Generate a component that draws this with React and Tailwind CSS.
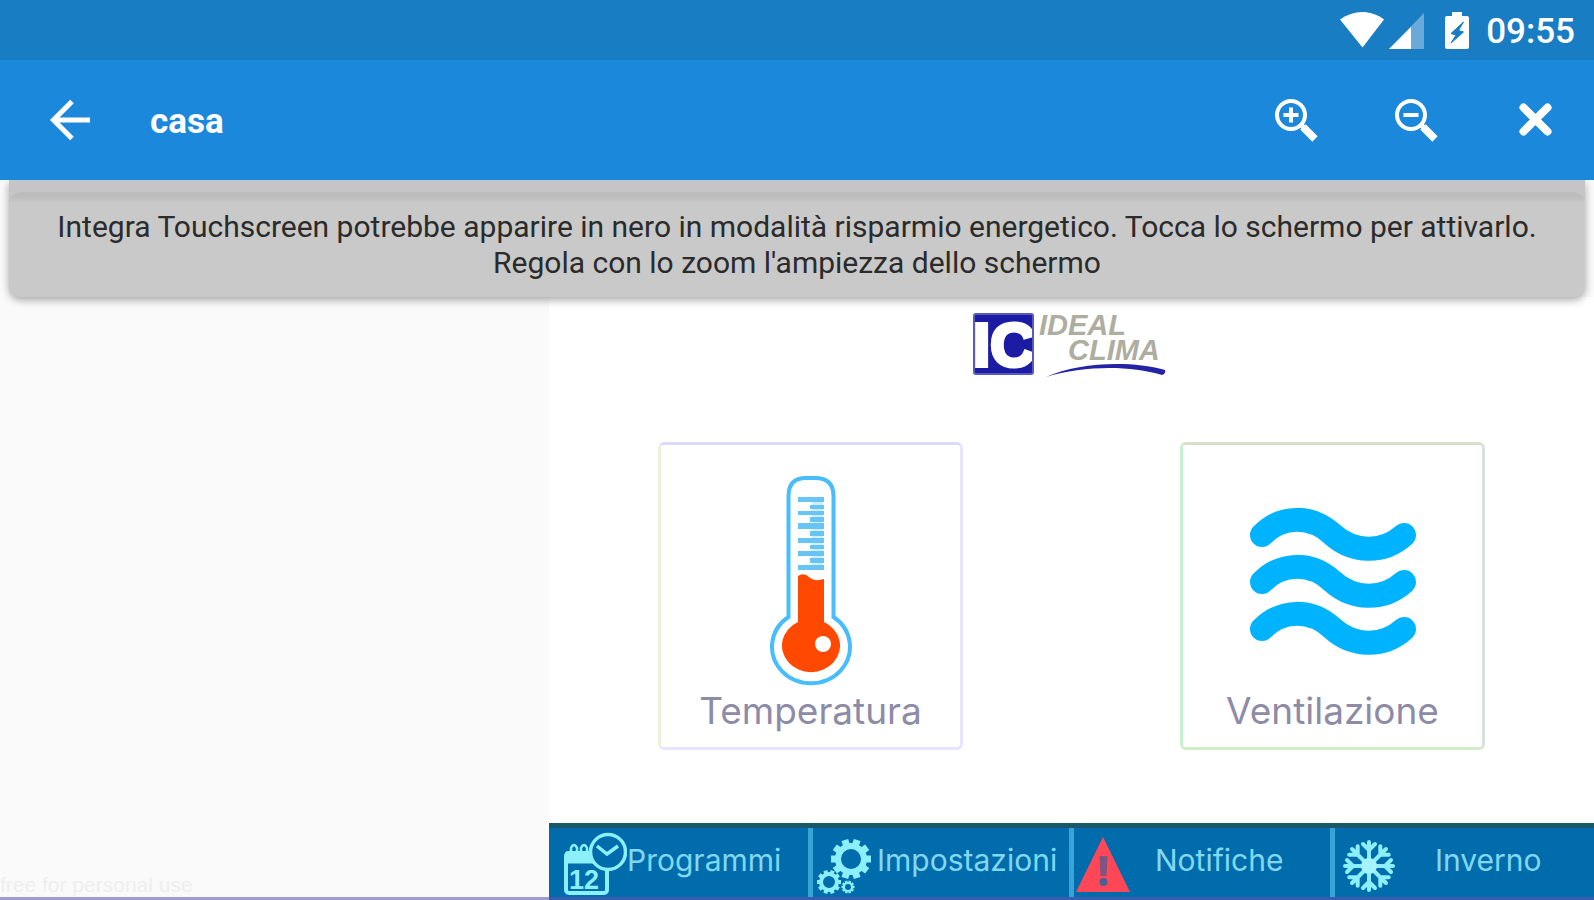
import React from "react";

function StatusBar() {
  return (
    <div className="flex h-15 items-center justify-end bg-[#197dc3] pr-[19px] text-white">
      <svg className="h-10 w-[46px]" viewBox="0 0 46 40" fill="currentColor" aria-hidden="true">
        <path d="M0 9.500C7 4.500 14.500 2 22 2s16 2.500 22 7.500L22.500 37.500z" />
      </svg>
      <svg className="ml-[3px] h-10 w-9" viewBox="0 0 36 40" aria-hidden="true">
        <path d="M0 39L35 3V39z" fill="#fff" fillOpacity=".35" />
        <path d="M0 39L22 17V39z" fill="#fff" />
      </svg>
      <svg className="ml-5 h-10 w-6" viewBox="0 0 24 40" aria-hidden="true">
        <path d="M7 2h10v4h5q2 0 2 2v29q0 2-2 2H2q-2 0-2-2V8q0-2 2-2h5z" fill="#fff" />
        <path d="M18.500 12L6 23.500l5 1.500-5 8L18.500 22l-5-1.500z" fill="#197dc3" stroke="#197dc3" />
      </svg>
      <time className="ml-[17px] pt-1 font-['Roboto'] text-[35px] leading-10 font-medium">09:55</time>
    </div>
  );
}

function Magnifier({ plus }) {
  return (
    <svg className="h-11 w-11" viewBox="0 0 44 44" fill="none" stroke="#fff" aria-hidden="true">
      <circle cx="17" cy="17" r="14" strokeWidth="4" />
      <path d="M26 26l4 4" strokeWidth="5" />
      <path d="M29 29l12 12" strokeWidth="7.500" />
      <path d={plus ? "M9.500 17h15M17 9.500v15" : "M9.500 17h15"} strokeWidth="4" />
    </svg>
  );
}

function AppBar() {
  return (
    <header className="relative z-20 flex h-30 items-center bg-[#1c88db] pr-9 pl-12 text-white">
      <button type="button" aria-label="Indietro" className="flex h-12 w-12 items-center">
        <svg className="h-11 w-11" viewBox="0 0 44 44" fill="none" stroke="#fff" strokeWidth="5" aria-hidden="true">
          <path d="M42 22H6M24 3.500L5.500 22 24 40.500" />
        </svg>
      </button>
      <h1 className="ml-[54px] pt-1 font-['Roboto'] text-[35px] leading-10 font-bold">casa</h1>
      <div className="ml-auto flex items-center gap-19">
        <button type="button" aria-label="Ingrandisci">
          <Magnifier plus />
        </button>
        <button type="button" aria-label="Riduci">
          <Magnifier />
        </button>
        <button type="button" aria-label="Chiudi">
          <svg className="h-11 w-11" viewBox="0 0 44 44" fill="none" stroke="#fff" strokeWidth="8" strokeLinecap="round" aria-hidden="true">
            <path d="M9.500 9.500l24 24M33.500 9.500l-24 24" />
          </svg>
        </button>
      </div>
    </header>
  );
}

function Notice() {
  return (
    <div className="relative z-10 px-[9px]">
      <div className="rounded-b-xl bg-[#c5c5c7] pt-3 shadow-[0_3px_9px_rgba(0,0,0,0.35)]">
        <p
          role="status"
          className="rounded-xl bg-linear-to-b from-[#bdbdbd] from-5% to-[#c9c9c9] to-10% px-12 pt-[17px] pb-4 text-center font-['Roboto'] text-[30px] leading-9 text-[#2b2b2b]"
        >
          Integra Touchscreen potrebbe apparire in nero in modalità risparmio energetico. Tocca lo schermo per attivarlo.
          Regola con lo zoom l'ampiezza dello schermo
        </p>
      </div>
    </div>
  );
}

function Logo() {
  return (
    <svg className="mx-auto h-16 w-[198px]" viewBox="0 0 198 64" role="img" aria-label="Ideal Clima">
      <rect x="1" y="1" width="59" height="60" rx="2" fill="#1b1ba4" />
      <text x="0" y="53" fill="#fff" stroke="#fff" strokeWidth="4" fontFamily="Liberation Sans, sans-serif" fontWeight="700" fontSize="62">
        IC
      </text>
      <rect x="1" y="1" width="59" height="60" rx="2" fill="none" stroke="#5a5abd" strokeWidth="2" />
      <g fill="#adada0" fontFamily="Liberation Sans, sans-serif" fontStyle="italic" fontWeight="700" fontSize="29">
        <text x="66" y="22">IDEAL</text>
        <text x="95" y="47">CLIMA</text>
      </g>
      <path d="M73 64C105 50 155 47 192 57q1 4-3 5C155 52 110 53 73 64z" fill="#2323a6" />
    </svg>
  );
}

const ticks = [
  [22, 5, 1], [30, 4, 0], [36, 4, 1], [42, 5, 0], [48, 6, 1], [56, 5, 0],
  [63, 5, 1], [70, 4, 0], [76, 5, 1], [83, 5, 0], [90, 5, 1],
];

function Thermometer() {
  return (
    <svg className="h-[212px] w-[84px]" viewBox="0 0 84 212" aria-hidden="true">
      <path
        d="M19.500 142V21Q19.500 3 37 3h9Q64.500 3 64.500 21V142A39 36.500 0 1 1 19.500 142z"
        fill="#fff"
        stroke="#47bdfb"
        strokeWidth="4"
      />
      {ticks.map(([y, h, long]) => (
        <rect key={y} x={long ? 29 : 41} y={y} width={long ? 26 : 14} height={h} fill="#69c4f6" />
      ))}
      <path d="M43 22h11v70H43z" fill="#69c4f6" fillOpacity=".3" />
      <path d="M29 101q6-4 11 1t15 2v43A29 26.500 0 1 1 29 147z" fill="#ff4800" />
      <circle cx="54" cy="169" r="8" fill="#fff" />
    </svg>
  );
}

function Waves() {
  return (
    <svg className="h-[150px] w-[168px]" viewBox="0 0 168 150" fill="none" stroke="#00b3ff" strokeWidth="24" strokeLinecap="round" aria-hidden="true">
      {[0, 47, 94].map((y) => (
        <path key={y} transform={`translate(0 ${y})`} d="M13 28C33 8 62 8 83 27S134 47 155 28" />
      ))}
    </svg>
  );
}

function Tile({ label, className, children }) {
  return (
    <button type="button" className={`flex h-[308px] w-[305px] flex-col items-center justify-end rounded-md border-3 bg-white pb-4 ${className}`}>
      {children}
      <span className="mt-1 font-['Inter'] text-[37px] leading-10 text-[#8d8ba6]">{label}</span>
    </button>
  );
}

function CalendarIcon() {
  return (
    <svg className="h-16 w-16" viewBox="0 0 64 64" fill="none" stroke="#8cf0fb" aria-hidden="true">
      <rect x="3" y="21" width="41" height="40" rx="3" strokeWidth="4" />
      <path d="M3 20h40v11H3z" fill="#8cf0fb" />
      <path d="M8 19v-3q3-6 6 0v3M18 19v-3q3-6 6 0v3" strokeWidth="2.500" />
      <circle cx="45" cy="20" r="17.500" fill="#006cac" strokeWidth="3.500" />
      <path d="M34 14l10 8 11-8" strokeWidth="3.500" />
      <text x="6" y="57" fill="#8cf0fb" stroke="none" fontFamily="Liberation Sans, sans-serif" fontWeight="700" fontSize="27">12</text>
    </svg>
  );
}

function Gear({ cx, cy, r, w, tooth }) {
  return (
    <g transform={`translate(${cx} ${cy})`} stroke="#8cf0fb" fill="none">
      <circle r={r} strokeWidth={w} />
      {[0, 36, 72, 108, 144, 180, 216, 252, 288, 324].map((a) => (
        <path key={a} transform={`rotate(${a + 18})`} d={`M0 ${-r}V${-r - tooth}`} strokeWidth={tooth} />
      ))}
    </g>
  );
}

function GearsIcon() {
  return (
    <svg className="h-16 w-14" viewBox="0 0 56 64" aria-hidden="true">
      <Gear cx={34} cy={27} r={13} w={6} tooth={7} />
      <Gear cx={12} cy={50} r={8} w={4} tooth={4} />
      <Gear cx={31} cy={55} r={4} w={2} tooth={2.5} />
    </svg>
  );
}

function AlertIcon() {
  return (
    <svg className="h-16 w-14" viewBox="0 0 56 64" aria-hidden="true">
      <path d="M28 5L55 60H1z" fill="#ff4757" />
      <path d="M24.500 24h8l-1 20h-6z" fill="#7d5580" />
      <circle cx="28.500" cy="50" r="4" fill="#4d5f95" />
    </svg>
  );
}

function SnowIcon() {
  return (
    <svg className="h-16 w-14" viewBox="0 0 56 64" fill="none" stroke="#8cf0fb" strokeWidth="4" strokeLinecap="round" aria-hidden="true">
      {[0, 45, 90, 135, 180, 225, 270, 315].map((a) => (
        <g key={a} transform={`translate(26 34) rotate(${a})`}>
          <path d="M0 0V-24M0-16l-6-6M0-16l6-6" />
        </g>
      ))}
      <circle cx="26" cy="34" r="8" fill="#a5f3fb" stroke="none" />
    </svg>
  );
}

function NavItem({ href, icon, label, className = "", labelClass = "" }) {
  return (
    <a href={href} className={`flex items-start pt-1 ${className}`}>
      {icon}
      <span className={`pt-2 font-['Inter'] text-[30px] leading-10 text-[#82d8f0] ${labelClass}`}>{label}</span>
    </a>
  );
}

export default function App() {
  return (
    <div className="flex min-h-screen flex-col bg-[#fafafa]">
      <StatusBar />
      <AppBar />
      <Notice />
      <div className="flex grow">
        <aside className="flex w-[549px] shrink-0 items-end border-b-3 border-[#9d9dcf]">
          <p className="font-['Liberation_Sans'] text-[21px] leading-6 text-[#eeeeee]">free for personal use</p>
        </aside>
        <main className="flex grow flex-col bg-white pt-4">
          <Logo />
          <div className="mt-[65px] flex justify-between px-[109px]">
            <Tile label="Temperatura" className="border-t-[#dcd9ff] border-r-[#e6e4ff] border-b-[#e6e4ff] border-l-[#eef0d8]">
              <Thermometer />
            </Tile>
            <Tile label="Ventilazione" className="border-t-[#d9dfc8] border-r-[#d5e2e0] border-b-[#d3ecc8] border-l-[#c6efcf]">
              <div className="pb-[30px]">
                <Waves />
              </div>
            </Tile>
          </div>
          <nav className="mt-auto grid h-[77px] grid-cols-[259fr_261fr_261fr_264fr] border-t-5 border-b-3 border-t-[#19586a] border-b-[#3a5cb0] bg-[#006cac]">
            <NavItem href="#programmi" icon={<CalendarIcon />} label="Programmi" className="pl-[14px]" />
            <NavItem href="#impostazioni" icon={<GearsIcon />} label="Impostazioni" className="border-l-5 border-[#35a5d5] pl-1" labelClass="pl-1" />
            <NavItem href="#notifiche" icon={<AlertIcon />} label="Notifiche" className="border-l-5 border-[#35a5d5] pl-px" labelClass="pl-6" />
            <NavItem href="#inverno" icon={<SnowIcon />} label="Inverno" className="border-l-5 border-[#35a5d5] pl-2" labelClass="pl-9" />
          </nav>
        </main>
      </div>
    </div>
  );
}
